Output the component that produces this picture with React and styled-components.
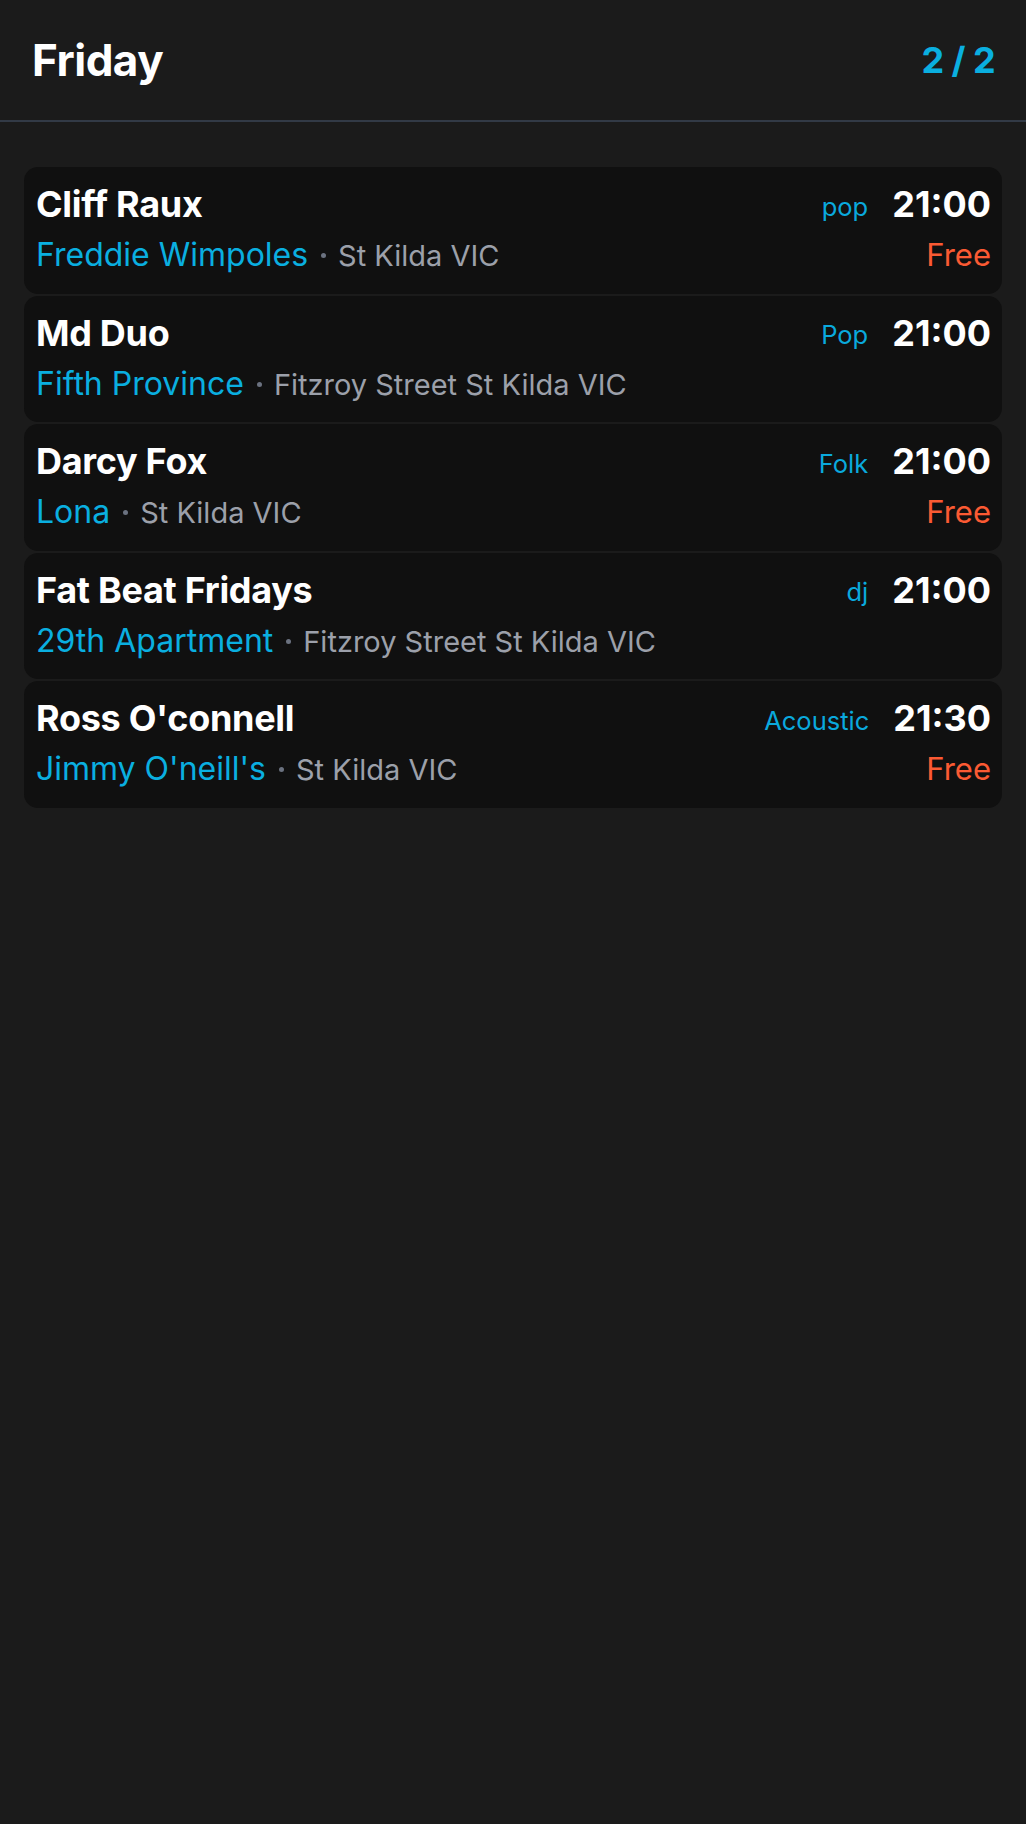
import React from "react";
import styled, { createGlobalStyle } from "styled-components";

const Global = createGlobalStyle`
  html, body { margin: 0; padding: 0; background: #1b1b1b; }
  body { font-family: Inter, "Noto Sans", "Liberation Sans", sans-serif; -webkit-font-smoothing: antialiased; }
  #root { min-height: 1824px; background: #1b1b1b; }
`;

const Page = styled.div`
  min-height: 1824px;
  background: #1b1b1b;
  color: #fff;
`;

const Header = styled.header`
  height: 120px;
  padding: 0 31px 0 32px;
  display: flex;
  align-items: center;
  justify-content: space-between;
  border-bottom: 2px solid #323a46;
`;

const DayTitle = styled.h1`
  margin: 0;
  font-size: 44px;
  font-weight: 700;
  letter-spacing: -0.5px;
  color: #fff;
`;

const PageCount = styled.div`
  font-size: 36px;
  font-weight: 700;
  color: #0aafe0;
  letter-spacing: -0.6px;
`;

const List = styled.main`
  padding: 45px 24px;
  display: flex;
  flex-direction: column;
  gap: 2px;
`;

const Card = styled.article`
  background: #101010;
  border-radius: 14px;
  padding: 15px 11px 20.5px 12px;
  display: flex;
  flex-direction: column;
  gap: 11px;
`;

const Row = styled.div`
  display: flex;
  align-items: center;
  justify-content: space-between;
  gap: 16px;
  height: ${(p) => p.$h}px;
`;

const Title = styled.h2`
  margin: 0;
  font-size: 36px;
  line-height: 44px;
  font-weight: 700;
  letter-spacing: -0.3px;
  color: #fff;
`;

const Meta = styled.div`
  display: flex;
  align-items: center;
  gap: 24px;
`;

const Genre = styled.span`
  font-size: 25.5px;
  padding-top: 4px;
  color: #0aa9dd;
`;

const Time = styled.span`
  font-size: 36px;
  line-height: 44px;
  font-weight: 700;
  color: #fff;
`;

const Place = styled.div`
  font-size: 32px;
  line-height: 36px;
  white-space: nowrap;
`;

const Venue = styled.span`
  color: #0aafe0;
  line-height: 1;
`;

const Dot = styled.span`
  display: inline-block;
  width: 5px;
  height: 5px;
  border-radius: 50%;
  background: #6b7280;
  margin: 0 12px 0 13px;
  vertical-align: 8px;
`;

const Location = styled.span`
  color: #9ca0aa;
  font-size: 29px;
  line-height: 1;
`;

const Price = styled.span`
  font-size: 31px;
  line-height: 36px;
  color: #fb5a33;
`;

const gigs = [
  { title: "Cliff Raux", genre: "pop", time: "21:00", venue: "Freddie Wimpoles", location: "St Kilda VIC", free: true },
  { title: "Md Duo", genre: "Pop", time: "21:00", venue: "Fifth Province", location: "Fitzroy Street St Kilda VIC", free: false },
  { title: "Darcy Fox", genre: "Folk", time: "21:00", venue: "Lona", location: "St Kilda VIC", free: true },
  { title: "Fat Beat Fridays", genre: "dj", time: "21:00", venue: "29th Apartment", location: "Fitzroy Street St Kilda VIC", free: false },
  { title: "Ross O'connell", genre: "Acoustic", time: "21:30", venue: "Jimmy O'neill's", location: "St Kilda VIC", free: true },
];

export default function App() {
  return (
    <Page>
      <Global />
      <Header>
        <DayTitle>Friday</DayTitle>
        <PageCount>2 / 2</PageCount>
      </Header>
      <List>
        {gigs.map((g) => (
          <Card key={g.title}>
            <Row $h={44}>
              <Title>{g.title}</Title>
              <Meta>
                <Genre>{g.genre}</Genre>
                <Time>{g.time}</Time>
              </Meta>
            </Row>
            <Row $h={36}>
              <Place>
                <Venue>{g.venue}</Venue>
                <Dot />
                <Location>{g.location}</Location>
              </Place>
              {g.free ? <Price>Free</Price> : null}
            </Row>
          </Card>
        ))}
      </List>
    </Page>
  );
}
